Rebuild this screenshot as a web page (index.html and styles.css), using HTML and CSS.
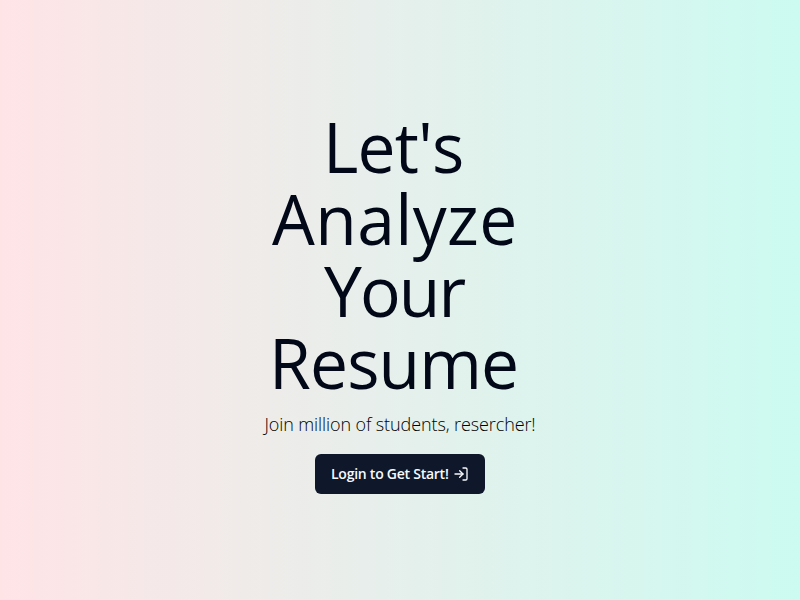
FILE: index.html
```html
<!DOCTYPE html>
<html lang="en">
<head>
<meta charset="utf-8">
<title>Resume Analyzer</title>
<link rel="stylesheet" href="styles.css">
</head>
<body>
<main class="hero">
  <div class="content">
    <h1 class="title"><span class="l1">Let's</span><span class="l2">Analyze</span><span class="l3">Your</span><span class="l4">Resume</span></h1>
    <p class="subtitle">Join million of students, resercher!</p>
    <button class="login"><span class="label">Login to Get Start!</span>
      <svg class="icon" viewBox="0 0 24 24" fill="none" stroke="currentColor" stroke-width="2" stroke-linecap="round" stroke-linejoin="round"><path d="M15 3h4a2 2 0 0 1 2 2v14a2 2 0 0 1-2 2h-4"/><path d="M10 17l5-5-5-5"/><path d="M15 12H3"/></svg>
    </button>
  </div>
</main>
</body>
</html>
```
FILE: styles.css
```css
* { box-sizing: border-box; }
body { margin: 0; font-family: "Segoe UI", "Open Sans", "Noto Sans", sans-serif; color: #020817; }
.hero { height: 100vh; display: flex; align-items: center; justify-content: center; background: linear-gradient(to right, #ffe4e6, #ccfbf1); }
.content { display: flex; flex-direction: column; align-items: center; padding-top: 4px; }
.title { margin: 0; width: 240px; font-size: 70px; line-height: 72px; font-weight: 400; display: flex; flex-direction: column; align-items: flex-start; white-space: nowrap; }
.title span { transform: scaleX(0.968); transform-origin: left; }
.l1 { letter-spacing: -0.9px; margin-left: 43px; }
.l2 { letter-spacing: 0.4px; margin-left: -8px; }
.l3 { letter-spacing: -2px; margin-left: 44px; }
.l4 { letter-spacing: -0.9px; margin-left: -11px; }
.subtitle { margin: 12px 0 0; font-size: 18px; line-height: 28px; white-space: nowrap; font-weight: 300; letter-spacing: -0.1px; color: #000; }
.login { margin-top: 16px; width: 170px; height: 40px; border: 0; border-radius: 6px; background: #0f172a; color: #f8fafc; display: flex; align-items: center; padding: 0 16px; font: 600 14px/20px "Segoe UI", "Open Sans", sans-serif; letter-spacing: -0.25px; white-space: nowrap; }
.label { width: 122px; text-align: left; }
.icon { width: 16px; height: 16px; flex: none; }
```
